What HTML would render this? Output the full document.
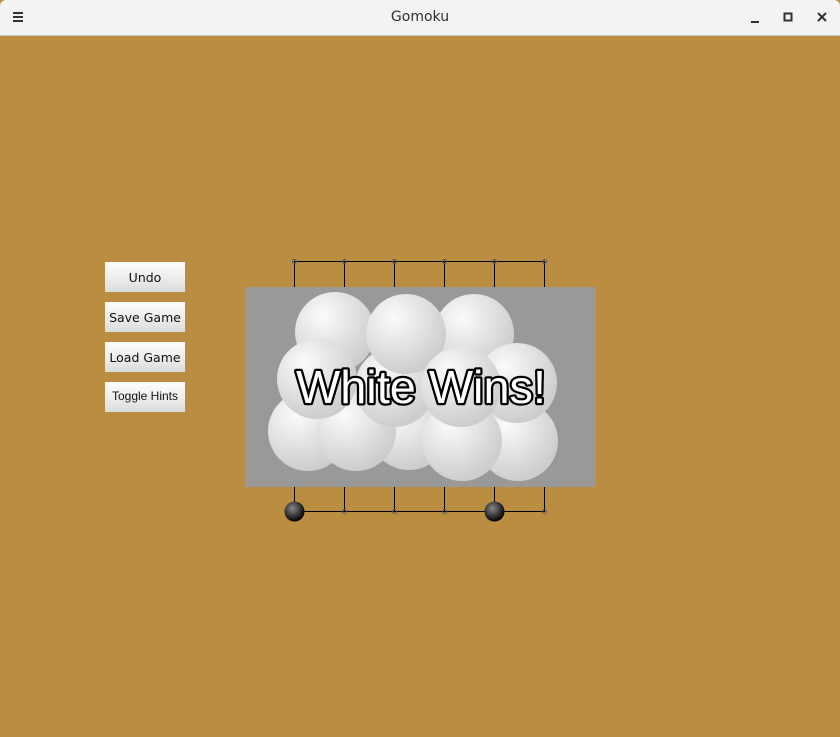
<!DOCTYPE html>
<html><head><meta charset="utf-8"><style>
html,body{margin:0;padding:0;width:840px;height:737px;overflow:hidden;background:#bb8d41;font-family:"DejaVu Sans","Liberation Sans",sans-serif;}
.tb{position:absolute;left:0;top:0;width:840px;height:35px;background:#f3f3f3;border-bottom:1px solid #c9c9c9;border-radius:6px 6px 0 0;}
.title{position:absolute;left:0;width:840px;top:9px;text-align:center;font-size:14px;color:#2e2e2e;}
.btn{position:absolute;left:105px;width:80px;height:30px;background:linear-gradient(#ffffff,#dcdcdc);font-size:12.5px;color:#111;text-align:center;line-height:32px;}
</style></head><body>
<div class="tb"><div class="title">Gomoku</div>
<svg width="840" height="35" style="position:absolute;left:0;top:0">
<g fill="#333"><rect x="13" y="12" width="10" height="2"/><rect x="13" y="16" width="10" height="2"/><rect x="13" y="20" width="10" height="2"/>
<rect x="751" y="21" width="8" height="2"/></g>
<rect x="784.5" y="13.5" width="7" height="7" fill="none" stroke="#333" stroke-width="2"/>
<path d="M818 13 L826 21 M826 13 L818 21" stroke="#333" stroke-width="2"/>
</svg></div>
<div class="btn" style="top:262px">Undo</div>
<div class="btn" style="top:302px">Save Game</div>
<div class="btn" style="top:342px">Load Game</div>
<div class="btn" style="top:382px;font-family:'Liberation Sans',sans-serif;font-size:12px;line-height:28px">Toggle Hints</div>
<svg width="840" height="737" style="position:absolute;left:0;top:0">
<defs>
<radialGradient id="w" cx="0.35" cy="0.3" r="0.7"><stop offset="0" stop-color="#fbfbfb"/><stop offset="1" stop-color="#cdcdcd"/></radialGradient>
<radialGradient id="b" cx="0.4" cy="0.35" r="0.65"><stop offset="0" stop-color="#888"/><stop offset="1" stop-color="#000"/></radialGradient>
</defs>
<g stroke="#000" stroke-width="1">
<line x1="294" y1="261.5" x2="545" y2="261.5"/><line x1="294" y1="511.5" x2="545" y2="511.5"/>
<line x1="294.5" y1="261" x2="294.5" y2="511"/><line x1="344.5" y1="261" x2="344.5" y2="511"/>
<line x1="394.5" y1="261" x2="394.5" y2="511"/><line x1="444.5" y1="261" x2="444.5" y2="511"/>
<line x1="494.5" y1="261" x2="494.5" y2="511"/><line x1="544.5" y1="261" x2="544.5" y2="511"/>
</g>
<g fill="none" stroke="#555" stroke-width="1">
<circle cx="294.5" cy="261.5" r="2"/><circle cx="344.5" cy="261.5" r="2"/><circle cx="394.5" cy="261.5" r="2"/><circle cx="444.5" cy="261.5" r="2"/><circle cx="494.5" cy="261.5" r="2"/><circle cx="544.5" cy="261.5" r="2"/>
<circle cx="344.5" cy="511.5" r="2"/><circle cx="394.5" cy="511.5" r="2"/><circle cx="444.5" cy="511.5" r="2"/><circle cx="544.5" cy="511.5" r="2"/>
</g>
<circle cx="294.5" cy="511.5" r="10" fill="url(#b)"/>
<circle cx="494.5" cy="511.5" r="10" fill="url(#b)"/>
<rect x="245" y="287" width="351" height="200" fill="#999"/>
<g fill="url(#w)">
<circle cx="308" cy="431" r="40"/><circle cx="409" cy="430" r="40"/><circle cx="356" cy="431" r="40"/>
<circle cx="518" cy="441" r="40"/><circle cx="462" cy="441" r="40"/>
<circle cx="335" cy="332" r="40"/><circle cx="474" cy="334" r="40"/><circle cx="517" cy="383" r="40"/>
<circle cx="395" cy="387" r="40"/><circle cx="406" cy="334" r="40"/><circle cx="317" cy="379" r="40"/><circle cx="461" cy="387" r="40"/>
</g>
<text x="421" y="403" text-anchor="middle" font-family="Liberation Sans,sans-serif" font-size="46" textLength="250" lengthAdjust="spacingAndGlyphs" fill="#fff" stroke="#000" stroke-width="4.5" stroke-linejoin="round" paint-order="stroke">White Wins!</text>
</svg>
</body></html>
